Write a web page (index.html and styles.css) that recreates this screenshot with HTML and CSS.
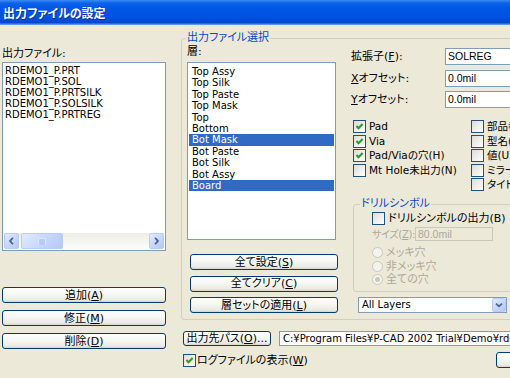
FILE: index.html
```html
<!DOCTYPE html>
<html lang="ja">
<head>
<meta charset="utf-8">
<title>出力ファイルの設定</title>
<link rel="stylesheet" href="styles.css">
</head>
<body>
<div class="titlebar"><span class="title">出力ファイルの設定</span></div>
<div class="client">
  <div class="left">
    <div class="lbl">出力ファイル:</div>
    <div class="listbox files">
      <div class="items">
        <div class="item">RDEMO1_P.PRT</div>
        <div class="item">RDEMO1_P.SOL</div>
        <div class="item">RDEMO1_P.PRTSILK</div>
        <div class="item">RDEMO1_P.SOLSILK</div>
        <div class="item">RDEMO1_P.PRTREG</div>
      </div>
      <div class="hscroll">
        <span class="sb-btn"><svg viewBox="0 0 14 14" width="14" height="14"><path d="M8.5 3.5 L5.5 7 L8.5 10.5" fill="none" stroke="#4D6185" stroke-width="2"/></svg></span>
        <span class="sb-thumb"><svg viewBox="0 0 8 7" width="8" height="7"><path d="M1 0V7M3 0V7M5 0V7M7 0V7" stroke="#EEF4FE" stroke-width="1"/><path d="M2 1V7M4 1V7M6 1V7" stroke="#8CB0F8" stroke-width="1"/></svg></span>
        <span class="sb-track"></span>
        <span class="sb-btn"><svg viewBox="0 0 14 14" width="14" height="14"><path d="M5.5 3.5 L8.5 7 L5.5 10.5" fill="none" stroke="#4D6185" stroke-width="2"/></svg></span>
      </div>
    </div>
    <div class="btn-stack side">
      <div class="btn">追加(<u>A</u>)</div>
      <div class="btn">修正(<u>M</u>)</div>
      <div class="btn">削除(<u>D</u>)</div>
    </div>
  </div>

  <div class="main">
    <div class="group main-group">
      <div class="legend">出力ファイル選択</div>
      <div class="group-body">
        <div class="layers-col">
          <div class="lbl layer-lbl">層:</div>
          <div class="listbox layers">
            <div class="row">Top Assy</div>
            <div class="row">Top Silk</div>
            <div class="row">Top Paste</div>
            <div class="row">Top Mask</div>
            <div class="row">Top</div>
            <div class="row">Bottom</div>
            <div class="row sel">Bot Mask</div>
            <div class="row">Bot Paste</div>
            <div class="row">Bot Silk</div>
            <div class="row">Bot Assy</div>
            <div class="row sel">Board</div>
          </div>
          <div class="btn-stack mid">
            <div class="btn">全て設定(<u>S</u>)</div>
            <div class="btn">全てクリア(<u>C</u>)</div>
            <div class="btn">層セットの適用(<u>L</u>)</div>
          </div>
        </div>

        <div class="opts-col">
          <div class="field"><span class="flabel">拡張子(<u>F</u>):</span><span class="input">SOLREG</span></div>
          <div class="field"><span class="flabel"><u>X</u>オフセット:</span><span class="input">0.0mil</span></div>
          <div class="field"><span class="flabel"><u>Y</u>オフセット:</span><span class="input">0.0mil</span></div>

          <div class="checks">
            <div class="ccol first">
              <div class="cbrow"><span class="cb"><svg class="chk" viewBox="0 0 11 11"><path d="M2.5 5 L4.5 7.2 L8.6 3" fill="none" stroke="#21A121" stroke-width="2"/></svg></span>Pad</div>
              <div class="cbrow"><span class="cb"><svg class="chk" viewBox="0 0 11 11"><path d="M2.5 5 L4.5 7.2 L8.6 3" fill="none" stroke="#21A121" stroke-width="2"/></svg></span>Via</div>
              <div class="cbrow"><span class="cb"><svg class="chk" viewBox="0 0 11 11"><path d="M2.5 5 L4.5 7.2 L8.6 3" fill="none" stroke="#21A121" stroke-width="2"/></svg></span>Pad/Viaの穴(H)</div>
              <div class="cbrow"><span class="cb"></span>Mt Hole未出力(N)</div>
            </div>
            <div class="ccol">
              <div class="cbrow"><span class="cb"></span>部品番号(R)</div>
              <div class="cbrow"><span class="cb"></span>型名(T)</div>
              <div class="cbrow"><span class="cb"></span>値(U)</div>
              <div class="cbrow"><span class="cb"></span>ミラー(I)</div>
              <div class="cbrow"><span class="cb"></span>タイトル(K)</div>
            </div>
          </div>

          <div class="group drill">
            <div class="legend">ドリルシンボル</div>
            <div class="cbrow drill-cb"><span class="cb"></span>ドリルシンボルの出力(B)</div>
            <div class="size-row">
              <span class="slabel dis">サイズ(<u>Z</u>):</span>
              <span class="input disabled">80.0mil</span>
            </div>
            <div class="radios">
              <div class="rrow dis"><span class="radio"></span>メッキ穴</div>
              <div class="rrow dis"><span class="radio"></span>非メッキ穴</div>
              <div class="rrow dis"><span class="radio on"></span>全ての穴</div>
            </div>
          </div>

          <div class="combo">
            <span class="combo-text">All Layers</span>
            <span class="drop"><svg viewBox="0 0 14 14" width="14" height="14"><path d="M3.5 5.5 L7 8.5 L10.5 5.5" fill="none" stroke="#4D6185" stroke-width="2"/></svg></span>
          </div>
        </div>
      </div>
    </div>

    <div class="path-row">
      <div class="btn path-btn">出力先パス(<u>O</u>)...</div>
      <span class="input path">C:¥Program Files¥P-CAD 2002 Trial¥Demo¥rdemo1.pcb</span>
    </div>
    <div class="log-row">
      <span class="cb"><svg class="chk" viewBox="0 0 11 11"><path d="M2.5 5 L4.5 7.2 L8.6 3" fill="none" stroke="#21A121" stroke-width="2"/></svg></span>
      <span class="log-label">ログファイルの表示(<u>W</u>)</span>
      <div class="btn ok-btn"></div>
    </div>
  </div>
</div>
</body>
</html>
```

FILE: styles.css
```css
* { box-sizing: border-box; }
html, body { margin: 0; padding: 0; }
body {
  width: 510px;
  height: 378px;
  overflow: hidden;
  background: #ECE9D8;
  color: #000;
  font: 11px/13px "DejaVu Sans", "Noto Sans CJK JP", sans-serif;
  font-feature-settings: "palt" 1;
}
u { text-decoration: underline; text-underline-offset: 1px; }

.titlebar {
  height: 25px;
  display: flex;
  align-items: center;
  padding-left: 3px;
  background: linear-gradient(to bottom,
    #3D8DF5 0px, #0D62EC 3px, #0056E6 8px, #0053E2 16px,
    #0049D4 22px, #0044C9 23px, #5E93E6 24px, #5E93E6 25px);
}
.title {
  color: #fff;
  font: bold 12px/14px "Noto Sans CJK JP", sans-serif;
  font-feature-settings: "palt" 1;
  text-shadow: 1px 1px 0 rgba(10, 24, 131, 0.55);
}

.client { display: flex; }

.left { width: 166px; flex: none; padding-left: 2px; padding-top: 22px; }
.left .lbl { height: 15px; line-height: 13px; }

.listbox { background: #fff; border: 1px solid #7F9DB9; }

.files {
  height: 189px;
  display: flex;
  flex-direction: column;
  padding: 2px 1px 1px;
}
.files .items { flex: 1; padding-left: 1px; font: 10px/11px "DejaVu Sans", sans-serif; }
.item { height: 11px; white-space: nowrap; }

.hscroll {
  height: 16px;
  display: flex;
  background: linear-gradient(to bottom, #EEEDE5, #FCFCFA);
}
.sb-btn, .sb-thumb {
  height: 16px;
  border: 1px solid #B9CCF6;
  border-radius: 2px;
  background: linear-gradient(135deg, #E2EBFE, #C3D5FC 60%, #B4C8F6);
  display: flex;
  align-items: center;
  justify-content: center;
}
.sb-btn { width: 15px; flex: none; }
.sb-thumb { width: 42px; margin-left: 2px; flex: none; }
.sb-track { flex: 1; }

.btn-stack { display: flex; flex-direction: column; }
.btn {
  height: 16px;
  border: 1px solid #003C74;
  border-radius: 3px;
  background: linear-gradient(to bottom, #FFFFFF 0%, #F6F6F3 45%, #EBEAE3 85%, #D8D3C8 100%);
  display: flex;
  align-items: center;
  justify-content: center;
  white-space: nowrap;
  line-height: 13px;
}
.side { margin-top: 36px; gap: 7px; }

.main { margin-left: 15px; padding-top: 13px; width: 345px; flex: none; }

.group { border: 1px solid #D0D0BF; border-radius: 3px; }
.legend {
  display: block;
  width: max-content;
  margin-top: -8px;
  padding: 0 1px;
  background: #ECE9D8;
  color: #0046D5;
  line-height: 13px;
  white-space: nowrap;
}
.main-group { padding: 0 0 6px 5px; }
.main-group > .legend { margin-left: -1px; }

.group-body { display: flex; }

.layers-col { width: 151px; flex: none; }
.layer-lbl { height: 18px; padding-top: 1px; line-height: 13px; }
.layers {
  width: 149px;
  height: 178px;
  padding: 3px 1px;
  font: 10px/11.4px "DejaVu Sans", sans-serif;
}
.row { height: 11.4px; padding-left: 3px; white-space: nowrap; }
.row.sel { background: #316AC5; color: #fff; }
.mid { margin-top: 14px; margin-left: 3px; width: 148px; gap: 5.5px; }

.opts-col { margin-left: 13px; flex: 1; padding-top: 4px; min-width: 0; }

.field { display: flex; align-items: center; height: 17px; }
.field + .field { margin-top: 4.5px; }
.flabel { width: 94px; flex: none; white-space: nowrap; }
.input {
  height: 17px;
  flex: 1;
  border: 1px solid #7F9DB9;
  background: #fff;
  padding-left: 2px;
  font: 10.5px/15px "Liberation Sans", sans-serif;
  white-space: nowrap;
  overflow: hidden;
}

.checks { display: flex; margin-top: 11.25px; }
.ccol { display: flex; flex-direction: column; }
.ccol.first { width: 118px; flex: none; }
.cbrow {
  height: 14.5px;
  display: flex;
  align-items: center;
  gap: 3px;
  padding-left: 2px;
  white-space: nowrap;
  font-size: 10.5px;
}
.cb {
  width: 13px;
  height: 13px;
  flex: none;
  border: 1px solid #1C5180;
  background: linear-gradient(135deg, #DCDCD7, #FFFFFF);
  display: block;
}
.chk { display: block; width: 11px; height: 11px; }

.drill { margin: 12.25px 0 0 2px; padding: 0 0 4.5px 18px; }
.drill > .legend { margin-left: -12px; }
.drill-cb { height: 14px; margin-top: 1px; padding-left: 0; font-size: 11px; }
.size-row { display: flex; align-items: center; height: 14px; margin-top: 2px; }
.slabel { width: 43px; flex: none; white-space: nowrap; font-size: 10px; letter-spacing: -0.3px; }
.input.disabled {
  flex: none;
  width: 78px;
  height: 14px;
  background: #ECE9D8;
  border-color: #C9C7BA;
  color: #ACA899;
  line-height: 12px;
}
.dis { color: #ACA899; }
.radios { margin-top: 5px; }
.rrow { height: 13.5px; display: flex; align-items: center; gap: 3px; white-space: nowrap; }
.radio {
  width: 11px;
  height: 11px;
  flex: none;
  border: 1px solid #CAC8BB;
  border-radius: 50%;
  background: #F4F3EE;
  display: flex;
  align-items: center;
  justify-content: center;
}
.radio.on::after {
  content: "";
  width: 5px;
  height: 5px;
  border-radius: 50%;
  background: #CAC8BB;
}

.combo {
  margin: 5px 0 0 7px;
  width: 149px;
  height: 16px;
  border: 1px solid #7F9DB9;
  background: #fff;
  display: flex;
  align-items: center;
}
.combo-text { flex: 1; padding-left: 3px; font: 10px/14px "DejaVu Sans", sans-serif; }
.drop {
  width: 14px;
  height: 14px;
  border: 1px solid #B9CCF6;
  border-radius: 2px;
  background: linear-gradient(135deg, #E2EBFE, #C3D5FC 60%, #B4C8F6);
  display: flex;
  align-items: center;
  justify-content: center;
}
.drop svg { width: 12px; height: 12px; }

.path-row { display: flex; margin-top: 11px; padding-left: 2px; }
.path-btn { width: 88px; flex: none; height: 15px; }
.input.path {
  margin-left: 8px;
  height: 15px;
  font: 10px/13px "DejaVu Sans", sans-serif;
  padding-left: 3px;
}

.log-row { display: flex; align-items: center; height: 16px; margin-top: 6px; padding-left: 2px; }
.log-label { margin-left: 1px; white-space: nowrap; }
.ok-btn { margin-left: auto; width: 30px; }
```
